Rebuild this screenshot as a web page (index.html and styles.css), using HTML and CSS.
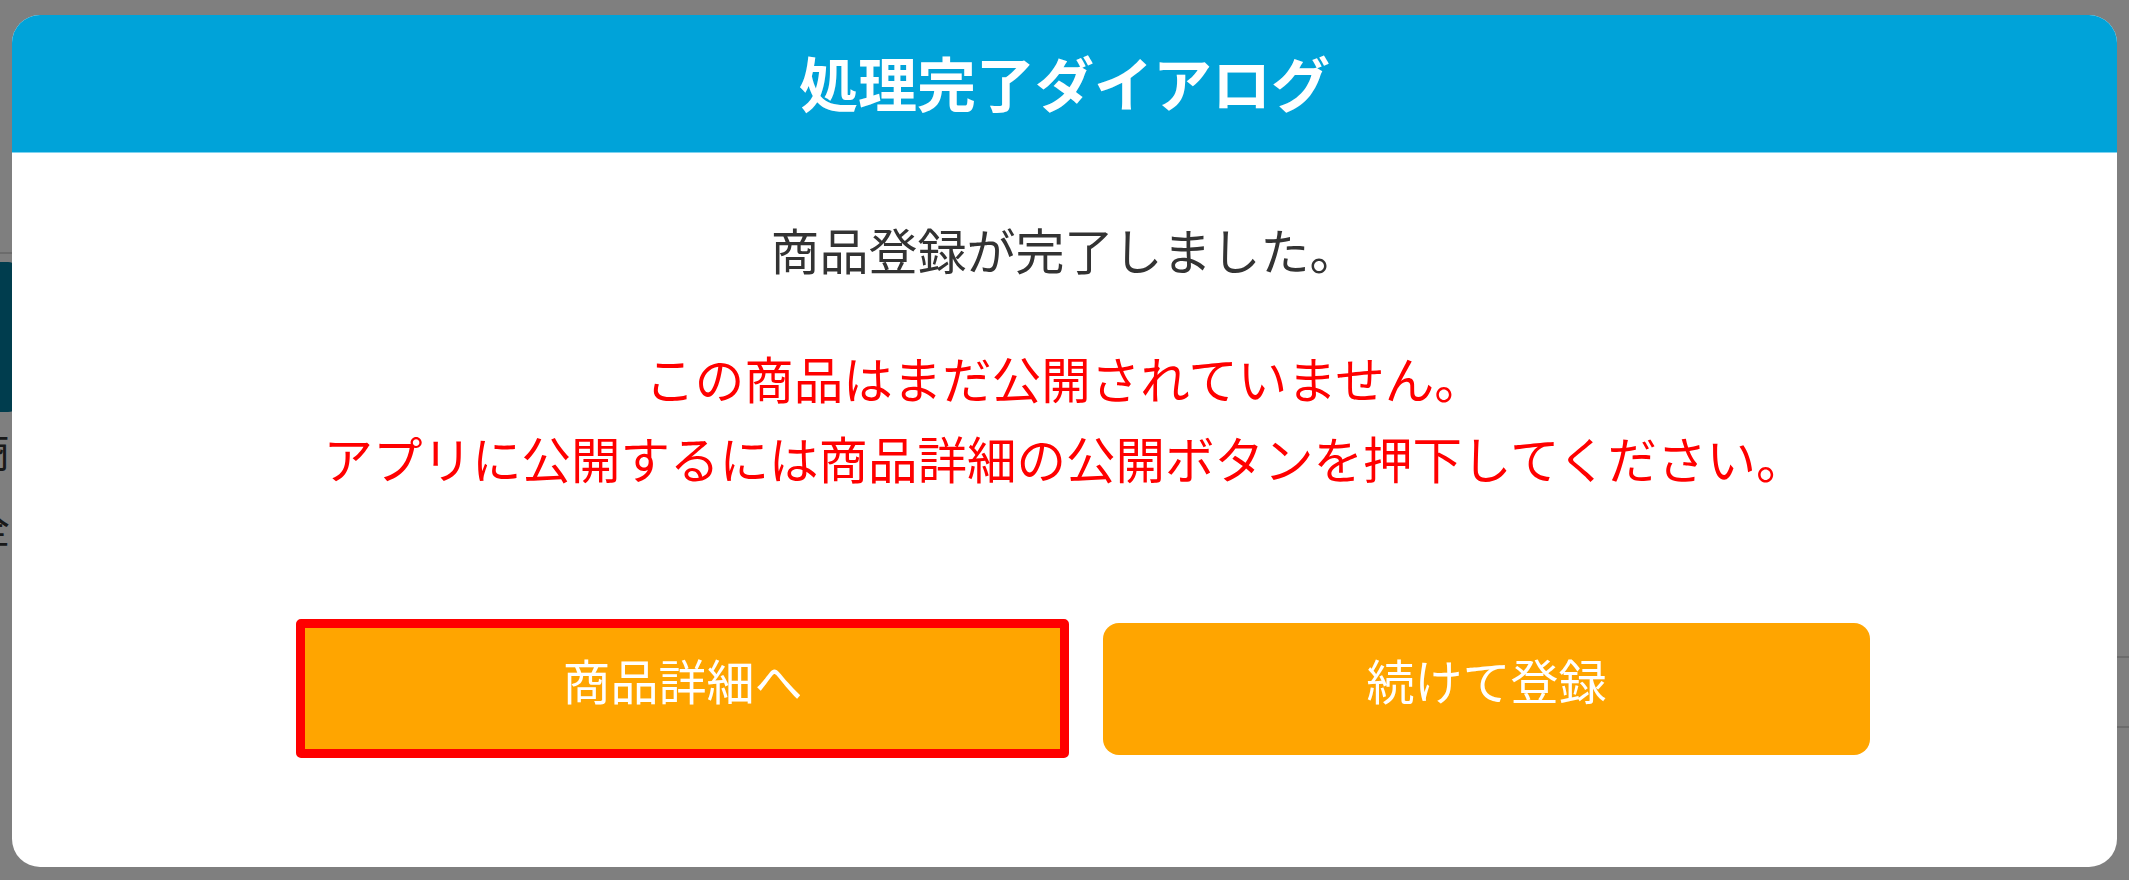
FILE: index.html
```html
<!DOCTYPE html>
<html lang="ja">
<head>
<meta charset="utf-8">
<title>処理完了ダイアログ</title>
<link rel="stylesheet" href="styles.css">
</head>
<body>
<div class="page">
  <div class="page-side">
    <div class="side-head"></div>
    <div class="side-btn"></div>
    <div class="side-text">商品</div>
    <div class="side-text">全て</div>
  </div>
  <div class="page-main">
    <div class="page-row"></div>
    <div class="page-row"></div>
  </div>
</div>

<div class="overlay">
  <div class="dialog">
    <div class="dialog-header">処理完了ダイアログ</div>
    <div class="dialog-body">
      <p class="msg">商品登録が完了しました。</p>
      <p class="warn">この商品はまだ公開されていません。<br>アプリに公開するには商品詳細の公開ボタンを押下してください。</p>
      <div class="actions">
        <button class="btn btn-detail">商品詳細へ</button>
        <button class="btn btn-next">続けて登録</button>
      </div>
    </div>
  </div>
</div>
</body>
</html>
```

FILE: styles.css
```css
html, body {
  margin: 0;
  padding: 0;
  height: 100%;
}
body {
  background: #ffffff;
  font-family: "Noto Sans CJK JP", "Noto Sans", sans-serif;
  overflow: hidden;
}

/* background page (mostly hidden behind the dialog) */
.page {
  display: flex;
  height: 880px;
}
.page-side {
  width: 60px;
  display: flex;
  flex-direction: column;
}
.side-head {
  height: 252px;
  border-bottom: 2px solid #d8d8d8;
}
.side-btn {
  margin-top: 8px;
  height: 150px;
  width: 40px;
  margin-left: -20px;
  background: #007a9c;
  border-radius: 12px;
}
.side-text {
  font-size: 40px;
  line-height: 76px;
  color: #333;
  margin-left: -30px;
  white-space: nowrap;
}
.page-main {
  flex: 1;
  padding-top: 656px;
}
.page-row {
  height: 68px;
  border-top: 2px solid #d8d8d8;
}

/* modal */
.overlay {
  position: fixed;
  inset: 0;
  background: rgba(0, 0, 0, 0.5);
  display: flex;
  align-items: flex-start;
  justify-content: flex-start;
  padding: 15px 0 0 12px;
  box-sizing: border-box;
}
.dialog {
  width: 2105px;
  height: 852px;
  background: #ffffff;
  border-radius: 28px;
  overflow: hidden;
  display: flex;
  flex-direction: column;
}
.dialog-header {
  height: 133px;
  padding-bottom: 4px;
  background: #00a3d9;
  border-bottom: 1px solid #7fd3f0;
  color: #ffffff;
  font-size: 59px;
  font-weight: bold;
  display: flex;
  align-items: center;
  justify-content: center;
  flex: none;
}
.dialog-body {
  display: flex;
  flex-direction: column;
  align-items: center;
}
.msg {
  margin: 56px 0 0;
  font-size: 49px;
  line-height: 80px;
  color: #333333;
}
.warn {
  margin: 49px 0 0;
  font-size: 49.5px;
  line-height: 80px;
  color: #ff0000;
  text-align: center;
}
.actions {
  align-self: stretch;
  display: flex;
  align-items: center;
  gap: 34px;
  padding-left: 284px;
  margin-top: 121px;
}
.btn {
  font-family: "Noto Sans CJK JP", "Noto Sans", sans-serif;
  font-size: 48px;
  color: #ffffff;
  background: #ffa500;
  border: none;
  box-sizing: border-box;
  display: flex;
  align-items: center;
  justify-content: center;
  padding: 0 0 20px;
}
.btn-detail {
  width: 773px;
  height: 139px;
  border: 9px solid #ff0000;
  border-radius: 5px;
}
.btn-next {
  width: 767px;
  height: 132px;
  border-radius: 16px;
}
```
